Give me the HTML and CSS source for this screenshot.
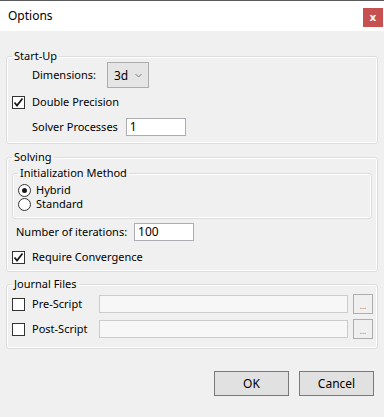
FILE: index.html
```html
<html>
<head>
	<title>Options</title>
	<meta charset='UTF-8'>
	<link rel="stylesheet" href="styles.css">
</head>
<body>
	<div class='titlebar'>
		<span class='title'>Options</span>
		<span class='close'>x</span>
	</div>
	<div class='content'>
		<fieldset class='group startup'>
			<legend>Start-Up</legend>
			<div class='row dimRow'>
				<span class='lbl'>Dimensions:</span>
				<div class='combo'>
					<span>3d</span>
					<svg width='7' height='5' viewBox='0 0 7 5'><path d='M0.5 1 L3.5 4 L6.5 1' fill='none' stroke='#7a7a7a' stroke-width='1'/></svg>
				</div>
			</div>
			<div class='row checkRow dblRow'>
				<span class='box'><svg width='11' height='11' viewBox='0 0 11 11'><path d='M1.5 5.5 L4 8.5 L9.5 1.5' fill='none' stroke='#1a1a1a' stroke-width='1.8'/></svg></span>
				<span class='lbl'>Double Precision</span>
			</div>
			<div class='row solverRow'>
				<span class='lbl'>Solver Processes</span>
				<span class='field solverField'>1</span>
			</div>
		</fieldset>

		<fieldset class='group solving'>
			<legend>Solving</legend>
			<fieldset class='group init'>
				<legend>Initialization Method</legend>
				<div class='radioRow'><span class='radio on'></span>Hybrid</div>
				<div class='radioRow'><span class='radio'></span>Standard</div>
			</fieldset>
			<div class='row iterRow'>
				<span class='lbl'>Number of iterations:</span>
				<span class='field iterField'>100</span>
			</div>
			<div class='row checkRow convRow'>
				<span class='box'><svg width='11' height='11' viewBox='0 0 11 11'><path d='M1.5 5.5 L4 8.5 L9.5 1.5' fill='none' stroke='#1a1a1a' stroke-width='1.8'/></svg></span>
				<span class='lbl'>Require Convergence</span>
			</div>
		</fieldset>

		<fieldset class='group journal'>
			<legend>Journal Files</legend>
			<div class='row fileRow preRow'>
				<span class='box'></span>
				<span class='lbl fileLbl'>Pre-Script</span>
				<span class='field off'></span>
				<span class='browse'>...</span>
			</div>
			<div class='row fileRow postRow'>
				<span class='box'></span>
				<span class='lbl fileLbl'>Post-Script</span>
				<span class='field off'></span>
				<span class='browse'>...</span>
			</div>
		</fieldset>

		<div class='buttons'>
			<span class='btn'>OK</span>
			<span class='btn'>Cancel</span>
		</div>
	</div>
</body>
</html>
```

FILE: styles.css
```css
body {
	margin: 0;
	background-color: #f0f0f0;
	font-family: "Noto Sans", "Open Sans", sans-serif;
	font-size: 11px;
	color: #000000;
}
.titlebar {
	height: 30px;
	border-top: 1px solid #5a5a5a;
	background-color: #ffffff;
	display: flex;
	justify-content: space-between;
	align-items: flex-start;
}
.title {
	margin: 7px 0 0 8px;
	line-height: 16px;
	font-size: 12px;
}
.close {
	margin: 7px 1px 0 0;
	width: 20px;
	height: 19px;
	background-color: #c75050;
	color: #ffffff;
	font-weight: bold;
	font-size: 11px;
	line-height: 17px;
	text-align: center;
}
.content {
	padding: 18px 6px 0 6px;
}
fieldset.group {
	margin: 0;
	padding: 0 5px 7px 5px;
	border: 1px solid #dcdcdc;
	border-radius: 3px;
	box-shadow: inset 0 0 0 1px #ffffff;
}
legend {
	padding: 0 2px;
	line-height: 14px;
}
.row {
	display: flex;
	align-items: center;
}
.lbl {
	line-height: 16px;
}
.dimRow {
	margin-left: 20px;
	margin-top: -1px;
}
.combo {
	margin-left: 11px;
	width: 42px;
	height: 26px;
	box-sizing: border-box;
	border: 1px solid #acacac;
	background-color: #e5e5e5;
	display: flex;
	align-items: center;
	padding-left: 6px;
	font-size: 12px;
}
.combo svg {
	margin-left: 7px;
}
.checkRow .lbl {
	margin-left: 7px;
}
.box {
	width: 11px;
	height: 11px;
	border: 1px solid #333333;
	background-color: #ffffff;
	display: flex;
}
.dblRow {
	margin-top: 6px;
}
.solverRow {
	margin-top: 8px;
	margin-left: 20px;
}
.field {
	height: 16px;
	border: 1px solid #abadb3;
	background-color: #ffffff;
	line-height: 16px;
	padding-left: 3px;
	font-size: 12px;
}
.solverField {
	margin-left: 8px;
	width: 55px;
}
.solving {
	margin-top: 6px !important;
	padding-bottom: 6px !important;
}
fieldset.init {
	margin-top: 2px;
	padding: 3px 5px 7px 5px;
}
.radioRow {
	display: flex;
	align-items: center;
	line-height: 14px;
}
.radio {
	width: 11px;
	height: 11px;
	border: 1px solid #333333;
	border-radius: 50%;
	background-color: #ffffff;
	margin-right: 5px;
	display: flex;
	align-items: center;
	justify-content: center;
}
.radio.on::after {
	content: '';
	width: 5px;
	height: 5px;
	border-radius: 50%;
	background-color: #1a1a1a;
}
.iterRow {
	margin-top: 4px;
	margin-left: 4px;
}
.iterField {
	margin-left: 7px;
	width: 55px;
}
.convRow {
	margin-top: 8px;
}
.journal {
	margin-top: 5px !important;
	padding-right: 4px !important;
	padding-bottom: 9px !important;
}
.fileRow {
	height: 20px;
}
.preRow {
	margin-top: 3px;
}
.postRow {
	margin-top: 5px;
}
.fileLbl {
	margin-left: 7px;
	width: 67px;
}
.field.off {
	flex: 1;
	border-color: #cccccc;
	background-color: #f7f7f7;
}
.browse {
	margin-left: 5px;
	width: 18px;
	height: 18px;
	border: 1px solid #adadad;
	color: #7a7a7a;
	font-size: 8px;
	line-height: 22px;
	text-align: center;
}
.buttons {
	margin-top: 22px;
	display: flex;
	justify-content: flex-end;
	gap: 10px;
	padding-right: 4px;
}
.btn {
	width: 73px;
	height: 23px;
	border: 1px solid #7a7a7a;
	background-color: #e1e1e1;
	line-height: 23px;
	text-align: center;
	font-size: 12px;
}
```
